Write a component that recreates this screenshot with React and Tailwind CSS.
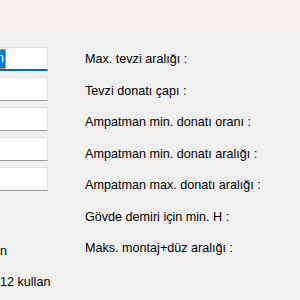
export default function App() {
  const labels = [
    'Max. tevzi aralığı :',
    'Tevzi donatı çapı :',
    'Ampatman min. donatı oranı :',
    'Ampatman min. donatı aralığı :',
    'Ampatman max. donatı aralığı :',
    'Gövde demiri için min. H :',
    'Maks. montaj+düz aralığı :',
  ]

  return (
    <div
      className="h-[300px] w-[300px] overflow-hidden bg-[#f0f0f0] text-[12.6px] text-[#000]"
      style={{ fontFamily: '"Liberation Sans", Arial, sans-serif' }}
    >
      {/* title strip */}
      <div className="h-[33px] bg-[#f9f1ec]" />

      <div className="flex">
        {/* inputs, cut off at the left edge */}
        <div className="w-[48px] shrink-0">
          <div className="mt-[14px] flex flex-col gap-[6px]">
            <div className="flex h-6 items-center overflow-hidden border-y border-r border-[#e3e3e3] border-b-2 border-b-[#0067c0] bg-white">
              <span className="-ml-[4px] flex h-[18px] items-center bg-[#0078d7] px-[1px] text-white outline outline-1 outline-[#f08a24]">
                n
              </span>
            </div>
            {[0, 1, 2, 3].map((i) => (
              <div
                key={i}
                className="h-6 border-y border-r border-[#e3e3e3] border-b-[#9a9a9a] bg-white"
              />
            ))}
          </div>
          <div className="mt-[45px] flex h-[31px] items-center whitespace-nowrap">n</div>
          <div className="flex h-[31px] items-center whitespace-nowrap">12 kullan</div>
        </div>

        {/* labels */}
        <div className="ml-[37px] mt-[11px] flex flex-col">
          {labels.map((l) => (
            <div key={l} className="flex h-[31.5px] items-center whitespace-nowrap">
              {l}
            </div>
          ))}
        </div>
      </div>
    </div>
  )
}
